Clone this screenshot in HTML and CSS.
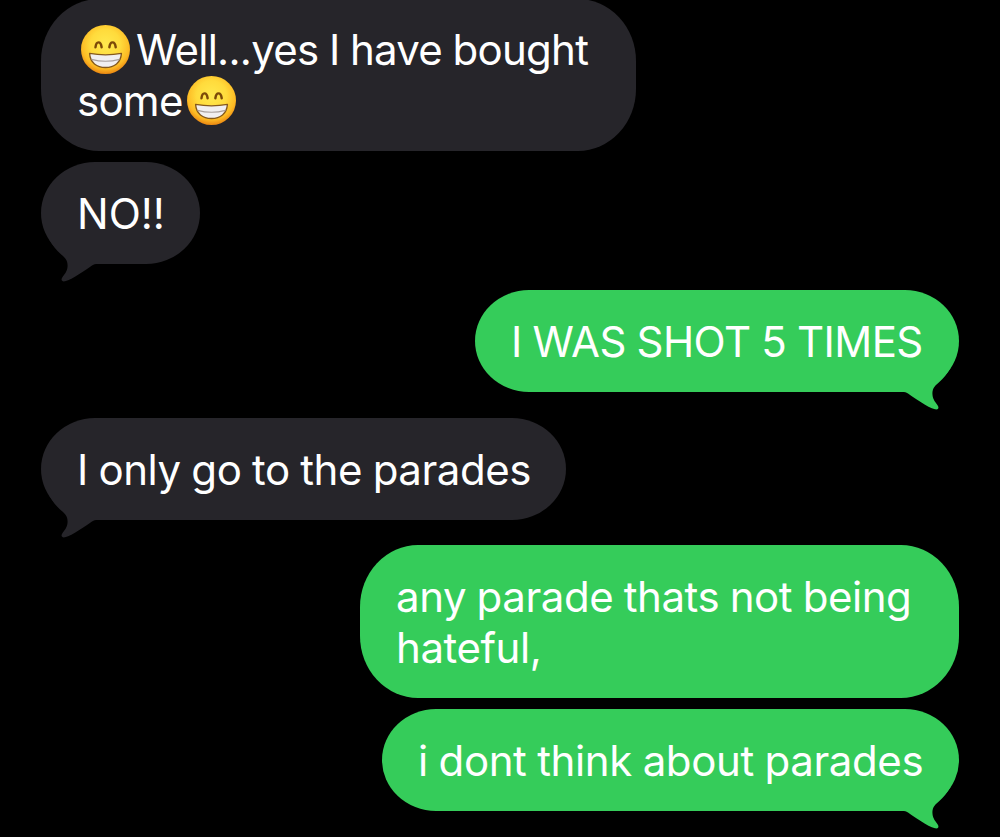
FILE: index.html
```
<!DOCTYPE html>
<html lang="en">
<head>
    <meta charset="UTF-8">
    <meta name="viewport" content="width=device-width, initial-scale=1.0">
    <title>Messages</title>
    <link rel="stylesheet" href="styles.css">
</head>
<body>
    <!-- shared shapes -->
    <svg class="defs" width="0" height="0">
        <defs>
            <radialGradient id="face" cx="50%" cy="40%" r="61%">
                <stop offset="0" stop-color="#ffe94e"/>
                <stop offset="0.5" stop-color="#ffdb3c"/>
                <stop offset="0.8" stop-color="#fdbb24"/>
                <stop offset="1" stop-color="#e98310"/>
            </radialGradient>
            <symbol id="grin" viewBox="0 0 48 48">
                <circle cx="24" cy="24" r="24" fill="url(#face)"/>
                <path d="M14.2 21.8C14.8 15.4 19.4 15.4 20.2 21.8M27.8 21.8C28.6 15.4 33.2 15.4 34 21.8" fill="none" stroke="#7c4a08" stroke-width="2.4" stroke-linecap="round"/>
                <path d="M8.4 27.8Q24 30.6 39.6 27.8C39 37 32.6 41.6 24 41.6S9 37 8.4 27.8Z" fill="#f1eff0" stroke="#85591c" stroke-width="1.3" stroke-linejoin="round"/>
                <path d="M10.3 33.6Q24 37.4 37.7 33.6" fill="none" stroke="#a9a09d" stroke-width="1.2"/>
            </symbol>
            <symbol id="tail" viewBox="-12 -12 50 42">
                <path d="M-10.5-12C-7.5-6.5 -3.5-1.5 1.2 2.6C6 6.5 8 9.5 7.5 15C7 20 4.5 22 2 26C.8 28.2 2 29.8 5 29.3C13 27 24 19 32 13.5C34 12.3 35 12 38 12V-12Z" fill="currentColor"/>
            </symbol>
        </defs>
    </svg>

    <div class="chat">
        <div class="bubble received first">
            <p><svg class="emoji"><use href="#grin"/></svg>Well...yes I have bought<br>some<svg class="emoji"><use href="#grin"/></svg></p>
        </div>
        <div class="bubble received no last">
            <p>NO!!</p>
            <svg class="tail"><use href="#tail"/></svg>
        </div>
        <div class="bubble sent shot last">
            <p>I WAS SHOT 5 TIMES</p>
            <svg class="tail"><use href="#tail"/></svg>
        </div>
        <div class="bubble received only last">
            <p>I only go to the parades</p>
            <svg class="tail"><use href="#tail"/></svg>
        </div>
        <div class="bubble sent any">
            <p>any parade thats not being<br>hateful,</p>
        </div>
        <div class="bubble sent dont last">
            <p>i dont think about parades</p>
            <svg class="tail"><use href="#tail"/></svg>
        </div>
    </div>
</body>
</html>
```
FILE: styles.css
```
* {
    box-sizing: border-box;
}
body {
    margin: 0;
    background-color: #000;
    font-family: Inter, "Liberation Sans", sans-serif;
    overflow: hidden;
}
.defs {
    display: block;
}
.chat {
    display: flex;
    flex-direction: column;
    height: 837px;
    padding: 0 41px;
    overflow: hidden;
}
.bubble {
    position: relative;
    flex: none;
    padding: 26px 0 25px 36px;
    margin-bottom: 11px;
    border-radius: 54px / 51px;
    color: #fff;
    font-size: 42px;
    line-height: 51px;
    white-space: nowrap;
}
.bubble p {
    margin: 0;
}
.bubble.last {
    margin-bottom: 26px;
}
.received {
    align-self: flex-start;
    background-color: #26252a;
}
.sent {
    align-self: flex-end;
    background-color: #35cc5a;
}
.first {
    width: 595px;
    margin-top: -1px;
    padding-top: 25px;
    border-radius: 58px / 62px;
    letter-spacing: -0.75px;
    word-spacing: -0.5px;
}
.no {
    width: 159px;
}
.shot {
    width: 484px;
    letter-spacing: -0.55px;
    word-spacing: -0.5px;
}
.only {
    width: 525px;
    letter-spacing: -0.45px;
    word-spacing: -0.7px;
}
.any {
    width: 599px;
    height: 153px;
    margin-top: -1px;
    border-radius: 58px / 62px;
    letter-spacing: -0.45px;
    word-spacing: -0.8px;
}
.dont {
    width: 577px;
    letter-spacing: -0.4px;
    word-spacing: -0.6px;
}
.emoji {
    width: 49px;
    height: 49px;
    margin: 1px 6px 0 4px;
    vertical-align: top;
}
.tail {
    position: absolute;
    left: 7px;
    bottom: -18px;
    width: 50px;
    height: 42px;
    color: #26252a;
}
.sent .tail {
    left: auto;
    right: 7px;
    color: #35cc5a;
    transform: scaleX(-1);
}
```
